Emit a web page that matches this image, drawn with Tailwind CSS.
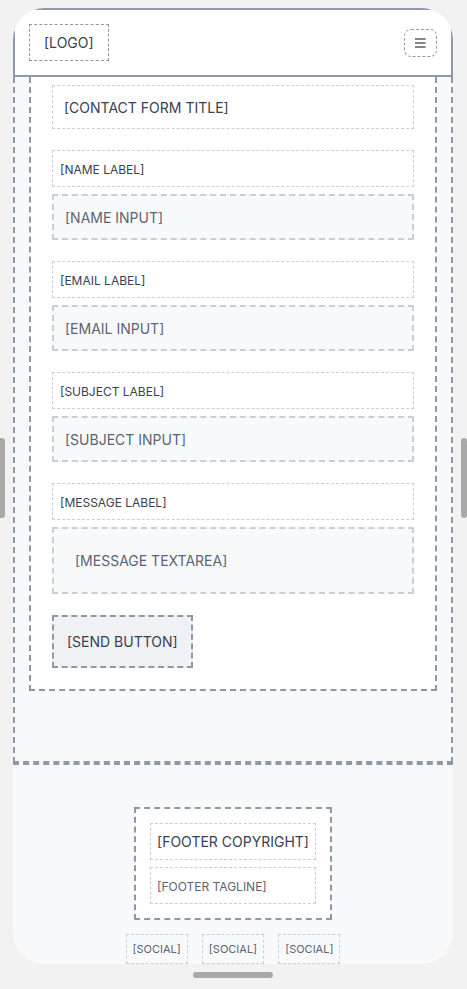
<!DOCTYPE html>
<html lang="en">
<head>
<meta charset="utf-8">
<meta name="viewport" content="width=device-width, initial-scale=1">
<title>Contact wireframe</title>
<script src="https://cdn.jsdelivr.net/npm/@tailwindcss/browser@4"></script>
</head>
<body class="relative bg-[#f2f2f2] px-[14px] pl-[13px] pt-2 pb-[25px] font-['Inter',sans-serif] text-[14px] leading-[21px] text-[#374151]">
<div class="overflow-hidden rounded-[32px] bg-[#f8f9fb]">
  <header class="relative z-10 flex items-center justify-between border-2 border-[#8e98a8] bg-white p-[14px]">
    <a href="#" class="border border-dashed border-[#8e98a8] px-[14px] py-[7px]">[LOGO]</a>
    <button type="button" aria-label="Menu" class="flex h-7 w-[33px] items-center justify-center rounded-[7px] border border-dashed border-[#8e98a8]">
      <svg class="h-[10px] w-[11px]" viewBox="0 0 11 10" fill="#5c5c5c" aria-hidden="true"><path d="M0 0.2H10.6V1.8H0ZM0 4.2H10.6V5.8H0ZM0 8.2H10.6V9.8H0Z"/></svg>
    </button>
  </header>
  <main class="border-x-2 border-b-2 border-dashed border-[#8e98a8] px-[14px] pb-[70px]">
    <form class="border-x-2 border-b-2 border-dashed border-[#8e98a8] bg-white px-[21px] pt-2 pb-[21px]">
      <h2 class="border border-dashed border-[#caced6] px-[11px] pt-[11px] pb-[10px]">[CONTACT FORM TITLE]</h2>
      <div class="mt-[21px] flex flex-col gap-[7px]">
        <label for="name" class="border border-dashed border-[#caced6] px-[7px] pt-2 pb-[6px] text-[12px] leading-[21px]">[NAME LABEL]</label>
        <input id="name" type="text" placeholder="[NAME INPUT]" class="h-[46px] w-full border-2 border-dashed border-[#caced6] bg-[#f8f9fb] px-[11px] placeholder:text-[#5b6474]">
      </div>
      <div class="mt-[21px] flex flex-col gap-[7px]">
        <label for="email" class="border border-dashed border-[#caced6] px-[7px] pt-2 pb-[6px] text-[12px] leading-[21px]">[EMAIL LABEL]</label>
        <input id="email" type="email" placeholder="[EMAIL INPUT]" class="h-[46px] w-full border-2 border-dashed border-[#caced6] bg-[#f8f9fb] px-[11px] placeholder:text-[#5b6474]">
      </div>
      <div class="mt-[21px] flex flex-col gap-[7px]">
        <label for="subject" class="border border-dashed border-[#caced6] px-[7px] pt-2 pb-[6px] text-[12px] leading-[21px]">[SUBJECT LABEL]</label>
        <input id="subject" type="text" placeholder="[SUBJECT INPUT]" class="h-[46px] w-full border-2 border-dashed border-[#caced6] bg-[#f8f9fb] px-[11px] placeholder:text-[#5b6474]">
      </div>
      <div class="mt-[21px] flex flex-col gap-[7px]">
        <label for="message" class="border border-dashed border-[#caced6] px-[7px] pt-2 pb-[6px] text-[12px] leading-[21px]">[MESSAGE LABEL]</label>
        <textarea id="message" rows="1" placeholder="[MESSAGE TEXTAREA]" class="block w-full resize-none overflow-hidden border-2 border-dashed border-[#caced6] bg-[#f8f9fb] p-[21px] placeholder:text-[#5b6474]"></textarea>
      </div>
      <button type="submit" class="mt-[21px] block border-2 border-dashed border-[#8e98a8] bg-[#f0f1f5] px-[13px] py-[14px]">[SEND BUTTON]</button>
    </form>
  </main>
  <footer class="flex flex-col items-center gap-[14px] border-t-2 border-dashed border-[#8e98a8] pt-[42px]">
    <div class="flex flex-col gap-[7px] border-2 border-dashed border-[#8e98a8] bg-white p-[14px]">
      <p class="border border-dashed border-[#caced6] px-[6px] py-[7px]">[FOOTER COPYRIGHT]</p>
      <p class="border border-dashed border-[#caced6] px-[6px] pt-2 pb-[6px] text-[12px] leading-[21px] text-[#5b6474]">[FOOTER TAGLINE]</p>
    </div>
    <nav aria-label="Social" class="flex gap-[14px] text-[11px] leading-[14px] text-[#5b6474]">
      <a href="#" class="border border-dashed border-[#caced6] px-[6px] py-[7px]">[SOCIAL]</a>
      <a href="#" class="border border-dashed border-[#caced6] px-[6px] py-[7px]">[SOCIAL]</a>
      <a href="#" class="border border-dashed border-[#caced6] px-[6px] py-[7px]">[SOCIAL]</a>
    </nav>
  </footer>
</div>
<!-- Resize handles around the preview frame -->
<div class="absolute left-0 top-[438px] h-20 w-[5px] rounded-r-[3px] bg-[#a9a9a9]"></div>
<div class="absolute right-0 top-[438px] h-20 w-[6px] rounded-[3px] bg-[#a9a9a9]"></div>
<div class="absolute bottom-[11px] left-1/2 -ml-[41px] h-[6px] w-20 rounded-[3px] bg-[#a9a9a9]"></div>
</body>
</html>
